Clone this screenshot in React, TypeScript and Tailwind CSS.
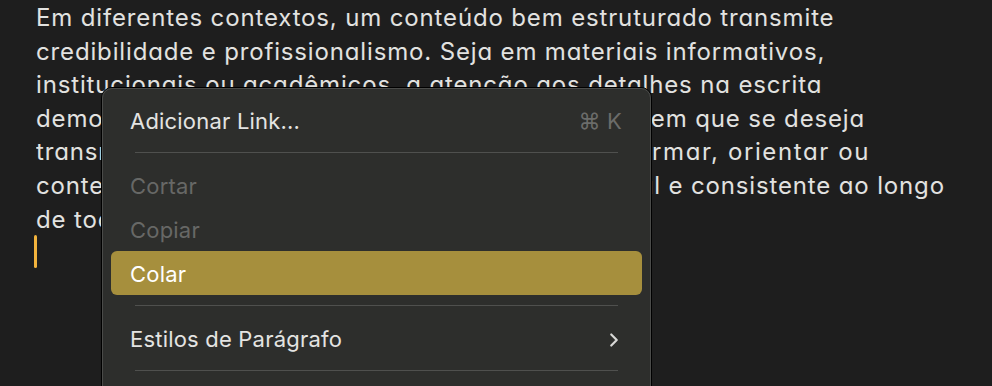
import { ChevronRight } from "lucide-react";

const lines = [
  "Em diferentes contextos, um conteúdo bem estruturado transmite",
  "credibilidade e profissionalismo. Seja em materiais informativos,",
  "institucionais ou acadêmicos, a atenção aos detalhes na escrita",
  "demonstra cuidado com o leitor e respeito ao tom em que se deseja",
];

function Separator() {
  return (
    <div className="py-[10px] px-[24px]">
      <div className="h-px bg-[#4f504e]" />
    </div>
  );
}

function MenuItem({
  label,
  disabled,
  active,
  shortcut,
  submenu,
}: {
  label: string;
  disabled?: boolean;
  active?: boolean;
  shortcut?: string;
  submenu?: boolean;
}) {
  return (
    <div
      className={
        "flex h-[44px] items-center justify-between rounded-[6px] pl-[19px] pr-[20px] pt-[3px] " +
        (active ? "bg-[#a68f3d] text-white" : disabled ? "text-[#676866]" : "text-[#e4e4e2]")
      }
    >
      <span>{label}</span>
      {shortcut && <span className="text-[#6b6c6a]">{shortcut}</span>}
      {submenu && <ChevronRight size={22} strokeWidth={2.4} className="mr-[-3px] text-[#d8d8d6]" />}
    </div>
  );
}

export default function App() {
  return (
    <div className="relative h-[386px] w-[992px] overflow-hidden bg-[#1e1e1e]">
      <div
        className="pl-[36px] pt-px text-[24px] leading-[33.6px] tracking-[0.85px] text-[#e2e2e0] [font-feature-settings:'cv11']"
        style={{ fontFamily: "Inter, 'Noto Sans', sans-serif" }}
      >
        {lines.map((l) => (
          <div key={l} className="whitespace-nowrap">
            {l}
          </div>
        ))}
        <div className="flex whitespace-nowrap">
          {/* part under the menu */}
          <span className="w-[616px] shrink-0 overflow-hidden">
            transmitir uma mensagem útil, seja ao explicar, info
          </span>
          <span className="tracking-[1.6px]">rmar, orientar ou</span>
        </div>
        <div className="whitespace-nowrap">
          conteúdo, mantendo um tom correto, e profissional e consistente ao longo
        </div>
        <div className="whitespace-nowrap">de todo o texto.</div>
        <div className="ml-[-2px] mt-[-1px] h-[33px] w-[3px] rounded-full bg-[#f2b33d]" />
      </div>

      <div
        className="absolute left-[101px] top-[87px] h-[330px] w-[551px] rounded-[11px] border border-black bg-[#2d2e2c] text-[22px] tracking-[0.2px]"
        style={{ fontFamily: "Inter, 'Noto Sans', sans-serif" }}
      >
        <div className="h-full rounded-[10px] border border-[#4a4b49] px-[8px] pt-[9px]">
          <MenuItem label="Adicionar Link..." shortcut="⌘ K" />
          <Separator />
          <MenuItem label="Cortar" disabled />
          <MenuItem label="Copiar" disabled />
          <MenuItem label="Colar" active />
          <Separator />
          <MenuItem label="Estilos de Parágrafo" submenu />
          <Separator />
        </div>
      </div>
    </div>
  );
}
